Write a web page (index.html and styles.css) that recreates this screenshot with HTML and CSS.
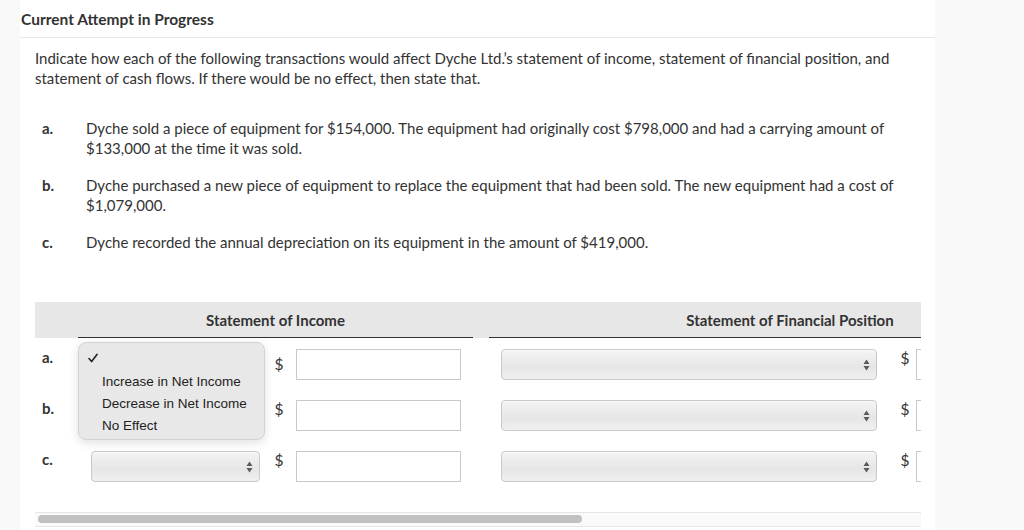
FILE: index.html
```html
<!DOCTYPE html>
<html>
<head>
<meta charset="utf-8">
<link rel="stylesheet" href="styles.css">
</head>
<body>
<div class="page">
  <div class="side"></div>
  <main class="main">
    <h1 class="title">Current Attempt in Progress</h1>
    <p class="intro">Indicate how each of the following transactions would affect Dyche Ltd.’s statement of income, statement of financial position, and statement of cash flows. If there would be no effect, then state that.</p>
    <ol class="items">
      <li class="item"><span class="lbl">a.</span><span class="txt">Dyche sold a piece of equipment for $154,000. The equipment had originally cost $798,000 and had a carrying amount of $133,000 at the time it was sold.</span></li>
      <li class="item"><span class="lbl">b.</span><span class="txt">Dyche purchased a new piece of equipment to replace the equipment that had been sold. The new equipment had a cost of $1,079,000.</span></li>
      <li class="item"><span class="lbl">c.</span><span class="txt">Dyche recorded the annual depreciation on its equipment in the amount of $419,000.</span></li>
    </ol>

    <div class="table-area">
      <div class="clip">
        <div class="table">
          <div class="thead">
            <div class="hcell hlabel"></div>
            <div class="hcell g1"><span>Statement of Income</span></div>
            <div class="hgap"></div>
            <div class="hcell g2"><span>Statement of Financial Position</span></div>
            <div class="hgap"></div>
            <div class="hcell g3"></div>
          </div>

          <div class="row">
            <div class="rlabel">a.</div>
            <div class="grp g1">
              <div class="sel s1"><span class="arrows"><svg width="7" height="12" viewBox="0 0 7 12"><path d="M3.5 0.5L6.5 5H0.5Z M3.5 11.5L0.5 7H6.5Z" fill="#5a5a5a"/></svg></span></div>
              <span class="dollar first">$</span>
              <div class="inp i1"></div>
            </div>
            <div class="gap"></div>
            <div class="grp g2">
              <div class="sel s2"><span class="arrows"><svg width="7" height="12" viewBox="0 0 7 12"><path d="M3.5 0.5L6.5 5H0.5Z M3.5 11.5L0.5 7H6.5Z" fill="#5a5a5a"/></svg></span></div>
              <span class="dollar">$</span>
              <div class="inp i2"></div>
            </div>
          </div>

          <div class="row">
            <div class="rlabel">b.</div>
            <div class="grp g1">
              <div class="sel s1"><span class="arrows"><svg width="7" height="12" viewBox="0 0 7 12"><path d="M3.5 0.5L6.5 5H0.5Z M3.5 11.5L0.5 7H6.5Z" fill="#5a5a5a"/></svg></span></div>
              <span class="dollar">$</span>
              <div class="inp i1"></div>
            </div>
            <div class="gap"></div>
            <div class="grp g2">
              <div class="sel s2"><span class="arrows"><svg width="7" height="12" viewBox="0 0 7 12"><path d="M3.5 0.5L6.5 5H0.5Z M3.5 11.5L0.5 7H6.5Z" fill="#5a5a5a"/></svg></span></div>
              <span class="dollar">$</span>
              <div class="inp i2"></div>
            </div>
          </div>

          <div class="row">
            <div class="rlabel">c.</div>
            <div class="grp g1">
              <div class="sel s1"><span class="arrows"><svg width="7" height="12" viewBox="0 0 7 12"><path d="M3.5 0.5L6.5 5H0.5Z M3.5 11.5L0.5 7H6.5Z" fill="#5a5a5a"/></svg></span></div>
              <span class="dollar">$</span>
              <div class="inp i1"></div>
            </div>
            <div class="gap"></div>
            <div class="grp g2">
              <div class="sel s2"><span class="arrows"><svg width="7" height="12" viewBox="0 0 7 12"><path d="M3.5 0.5L6.5 5H0.5Z M3.5 11.5L0.5 7H6.5Z" fill="#5a5a5a"/></svg></span></div>
              <span class="dollar">$</span>
              <div class="inp i2"></div>
            </div>
          </div>
        </div>
      </div>
      <div class="scrollbar"><div class="thumb"></div></div>

      <div class="popup">
        <div class="opt checked"><svg class="check" width="10" height="10" viewBox="0 0 10 10"><path d="M1 5.6L3.6 8.6L9 1.4" fill="none" stroke="#222" stroke-width="1.6" stroke-linecap="round" stroke-linejoin="round"/></svg></div>
        <div class="opt">Increase in Net Income</div>
        <div class="opt">Decrease in Net Income</div>
        <div class="opt">No Effect</div>
      </div>
    </div>
  </main>
  <div class="side right"></div>
</div>
</body>
</html>
```

FILE: styles.css
```css
* { box-sizing: border-box; }
html, body { margin: 0; padding: 0; }
body {
  font-family: Lato, "Open Sans", sans-serif;
  color: #333;
  background: #f9f9f9;
  width: 1024px;
  height: 530px;
  overflow: hidden;
}
.page { display: flex; height: 530px; }
.side { width: 20px; background: #f9f9f9; flex: none; }
.side.right { flex: 1; }
.main { width: 915px; flex: none; background: #fff; }

.title {
  margin: 0;
  font-size: 15.5px;
  font-weight: 700;
  line-height: 20px;
  padding: 9px 0 8px 1px;
  border-bottom: 1px solid #e8e8e8;
  color: #333;
}
.intro {
  margin: 0;
  padding: 10px 0 0 15px;
  width: 880px;
  font-size: 15px;
  line-height: 20px;
}
.items {
  list-style: none;
  margin: 30px 0 0 0;
  padding: 0 0 0 22px;
}
.item {
  display: flex;
  font-size: 15px;
  line-height: 20px;
  margin-bottom: 17px;
}
.item:last-child { margin-bottom: 0; }
.item .lbl { width: 44px; flex: none; font-weight: 700; font-size: 15px; }
.item .txt { width: 808px; }

.table-area {
  position: relative;
  margin: 50px 0 0 15px;
  width: 886px;
}
.clip { width: 886px; overflow: hidden; }
.table { width: 1500px; }
.thead {
  display: flex;
  height: 36px;
  background: #e7e7e7;
}
.hcell {
  display: flex;
  align-items: center;
  justify-content: center;
  font-size: 15px;
  font-weight: 700;
  color: #333;
  border-bottom: 1px solid #333;
}
.hcell.hlabel { width: 43px; border-bottom: none; }
.hgap { width: 16px; }
.g1 { width: 395px; flex: none; }
.g2 { width: 602px; flex: none; }
.g3 { width: 395px; flex: none; }

.row { display: flex; height: 51px; }
.rlabel {
  width: 43px;
  flex: none;
  padding: 10px 0 0 7px;
  font-size: 15px;
  font-weight: 700;
  line-height: 18px;
}
.gap { width: 16px; flex: none; }
.grp { display: flex; align-items: flex-start; padding: 11px 12px 0 13px; }
.g2.grp { padding-left: 12px; }

.sel {
  position: relative;
  height: 31px;
  border: 1px solid #c9c9c9;
  border-radius: 4px;
  background: linear-gradient(to bottom, #f4f4f4 0%, #e9e9e9 45%, #e6e6e6 60%, #f0f0f0 100%);
  box-shadow: inset 0 1px 0 #fafafa;
}
.s1 { width: 169px; }
.s2 { width: 376px; }
.arrows {
  position: absolute;
  right: 6px;
  top: 9px;
  display: flex;
}
.dollar {
  font-size: 15.5px;
  line-height: 18px;
  padding-top: 0;
  width: 36px;
  text-align: center;
  color: #333;
}
.g1 .dollar { width: 36px; padding-left: 2px; }
.g2 .dollar { width: 39px; padding-left: 17px; }
.dollar.first { padding-top: 6px; }
.inp {
  height: 31px;
  border: 1px solid #c9c9c9;
  background: #fff;
}
.i1 { width: 165px; }
.i2 { width: 163px; }

.scrollbar {
  margin-top: 21px;
  height: 15px;
  border-top: 1px solid #e6e6e6;
  border-bottom: 1px solid #e6e6e6;
  background: #fafafa;
  padding: 2px 0 0 3px;
}
.thumb {
  width: 544px;
  height: 8px;
  border-radius: 4px;
  background: #c1c1c1;
}

.popup {
  position: absolute;
  left: 43px;
  top: 40px;
  width: 187px;
  height: 98px;
  background: #e9e8e8;
  border: 1px solid #d3d3d3;
  border-radius: 8px;
  box-shadow: 0 3px 10px rgba(0,0,0,0.12);
  padding: 6px 0 0 0;
  font-family: "Liberation Sans", Arial, sans-serif;
  font-size: 13.5px;
  color: #222;
}
.opt { height: 22px; line-height: 22px; padding-left: 23px; }
.opt.checked { height: 22px; padding: 4px 0 0 9px; line-height: 0; }
.check { display: block; }
```
